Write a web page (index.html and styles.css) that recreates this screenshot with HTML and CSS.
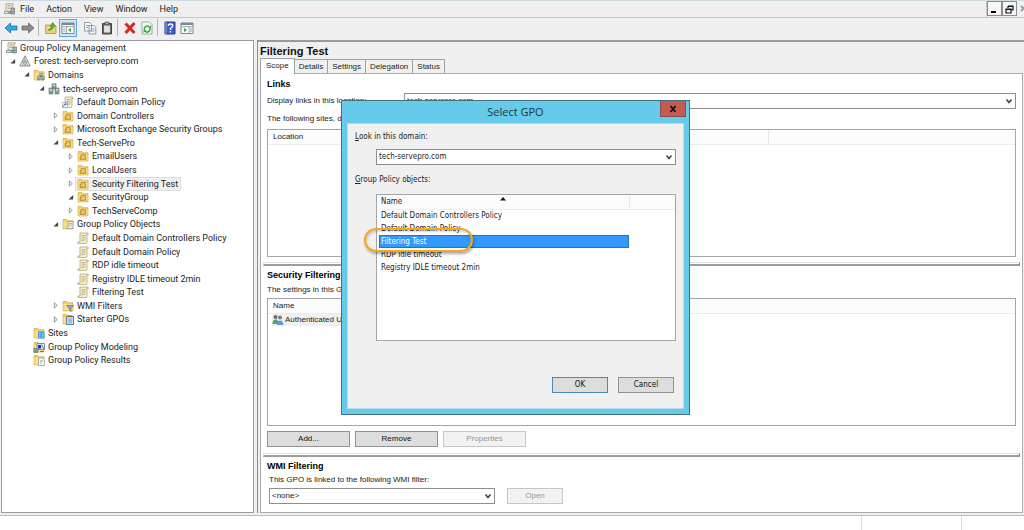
FILE: index.html
```
<!DOCTYPE html>
<html lang="en">
<head>
<meta charset="utf-8">
<title>Group Policy Management</title>
<link rel="stylesheet" href="styles.css">
</head>
<body>
<svg class="defs" aria-hidden="true">
  <symbol id="scroll" viewBox="0 0 12 12"><path d="M3 1h7.500q1 0 .8 1.500H10V10q0 1.500-1.500 1.500H1.500Q.5 11.500.8 10H3z" fill="#f6efcf" stroke="#a89868" stroke-width=".7"/><path d="M4.500 3.500h4M4.500 5.200h4M4.500 7h4M4.500 8.700h3" stroke="#b3a577" stroke-width=".8"/><path d="M9.500 1.200q2-.2 1.700 1.800H9.500z" fill="#c9b87e"/></symbol>
  <symbol id="folder" viewBox="0 0 12 12"><path d="M1 1.500h4l1 1.200h5V11H1z" fill="#f2cf6c" stroke="#d0a23a" stroke-width=".6"/><path d="M1.500 4h9v6.500h-9z" fill="#f8dd8b"/></symbol>
  <symbol id="console" viewBox="0 0 12 12"><path d="M3 .7h6.500q1 0 .7 1.300H9v6H3z" fill="#f4eed6" stroke="#9c9172" stroke-width=".7"/><path d="M4.500 2.500h3M4.500 4h3M4.500 5.500h3" stroke="#a79c78" stroke-width=".7"/><path d="M1 8h7l2 3H1z" fill="#9aa1a3"/><path d="M8 5h3.500v6H8z" fill="#aab2b5" stroke="#59636a" stroke-width=".6"/><path d="M2 9.500h3" stroke="#e8eef0"/><path d="M9 8.500h1.500" stroke="#36a345"/></symbol>
  <symbol id="forest" viewBox="0 0 12 12"><path d="M6 .8 11.300 11H.7z" fill="#ececec" stroke="#777" stroke-width=".8"/><path d="M6 1v5L3 11M6 6l3 5M3.300 6h5.400L6 11z" fill="#ccc" stroke="#888" stroke-width=".6"/></symbol>
  <symbol id="servers" viewBox="0 0 12 12"><path d="M4 .8h4v5H4zM1 5h4v6H1zM7 5h4v6H7z" fill="#9aa8aa" stroke="#59686c" stroke-width=".6"/><path d="M5 2.200h2M2 6.700h2M8 6.700h2" stroke="#eef3f3"/><path d="M5 4.300h1.500M2 9.500h1.500M8 9.500h1.500" stroke="#2da23d" stroke-width="1.200"/></symbol>
  <symbol id="domains" viewBox="0 0 12 12"><use href="#folder"/><use href="#servers" x="4" y="3.500" width="8" height="8.500"/></symbol>
  <symbol id="link" viewBox="0 0 12 12"><use href="#scroll"/><path d="M.5 6.500h5v5h-5z" fill="#fff" stroke="#7a8fb5" stroke-width=".6"/><path d="M1.500 10.500q.2-2.500 2.700-2.500M3 7l1.400 1L3.300 9.300" fill="none" stroke="#2355c4" stroke-width=".9"/></symbol>
  <symbol id="ou" viewBox="0 0 12 12"><use href="#folder"/><path d="M4 4.500h4.500v5H3V6.500h1z" fill="#d9aa3f" stroke="#a9822c" stroke-width=".6"/><path d="M5 6h2.500M4.500 7.800h3" stroke="#fdf0bd" stroke-width=".8"/></symbol>
  <symbol id="gpos" viewBox="0 0 12 12"><use href="#folder"/><path d="M6 3.500h5v7H4.500q-1-1 .5-1.500h1z" fill="#eceadf" stroke="#8e8a7a" stroke-width=".6"/><path d="M7 5.500h3M7 7.200h3" stroke="#999" stroke-width=".6"/></symbol>
  <symbol id="wmi" viewBox="0 0 12 12"><use href="#folder"/><path d="M4.500 5.500h7L9 8.500v3L7.300 10V8.500z" fill="#93abc0" stroke="#51697e" stroke-width=".6"/></symbol>
  <symbol id="starter" viewBox="0 0 12 12"><use href="#folder"/><path d="M4.500 3.500h7v8h-7z" fill="#cfe0f3" stroke="#3f5f88" stroke-width=".8"/><path d="M6 3.300h4" stroke="#8d5d36" stroke-width="1.500"/><path d="M6 6h4M6 7.700h4M6 9.400h4" stroke="#5f87b8" stroke-width=".7"/></symbol>
  <symbol id="sites" viewBox="0 0 12 12"><use href="#folder"/><path d="M5 4.500h6.500v7H5z" fill="#2f93dc"/><path d="M5.700 6.300h2M8.700 6.300h2M5.700 8.200h2M8.700 8.200h2M5.700 10.100h2M8.700 10.100h2" stroke="#cdeaff" stroke-width=".9"/></symbol>
  <symbol id="model" viewBox="0 0 12 12"><use href="#folder"/><path d="M4 2.500h7.500v6H4z" fill="#dfe6f5" stroke="#5969a0" stroke-width=".7"/><path d="M5 4h3v3.500H5z" fill="#1d36a8"/><path d="M8.500 3.500 11 8M7 10.500h4" stroke="#6674a3"/><path d="M.8 7.500h4v4h-4z" fill="#8aa08f" stroke="#4c6158" stroke-width=".5"/><path d="M2 10h1.500" stroke="#28b340" stroke-width="1.200"/></symbol>
  <symbol id="results" viewBox="0 0 12 12"><use href="#folder"/><path d="M5.500 4h4.200L11.500 6v5.500h-6z" fill="#f7f9fb" stroke="#7b8792" stroke-width=".6"/><path d="M7 7h3M7 9h1.500" stroke="#5690c5" stroke-width=".8"/></symbol>
  <symbol id="open" viewBox="0 0 12 12"><path d="M10.500 9.500h-8l8-8z" fill="#444"/></symbol>
  <symbol id="closed" viewBox="0 0 12 12"><path d="M4 1.500 9 6l-5 4.500z" fill="#fff" stroke="#777" stroke-width="1.300"/></symbol>
  <symbol id="chev" viewBox="0 0 8 8"><path d="m1.500 2.500 2.500 3 2.500-3" fill="none" stroke="#444" stroke-width="1.600"/></symbol>
</svg>

<header class="menubar">
  <svg class="ico"><use href="#console"/></svg>
  <nav class="menus">
    <button>File</button><button>Action</button><button>View</button><button>Window</button><button>Help</button>
  </nav>
  <div class="mdi">
    <button class="mdi-btn" aria-label="Minimize"><svg viewBox="0 0 12 12"><path d="M3 9h5" stroke="#000" stroke-width="2"/></svg></button>
    <button class="mdi-btn" aria-label="Restore"><svg viewBox="0 0 12 12"><path d="M5 3h5v4H8M5 3v2M5 3.500h5M3 6h5v4H3zM3 6.500h5" fill="none" stroke="#111" stroke-width="1.200"/></svg></button>
    <button class="mdi-close" aria-label="Close"><svg viewBox="0 0 12 12"><path d="m4 3 5 5M9 3 4 8" stroke="#8fa3b3" stroke-width="1.800"/></svg></button>
  </div>
</header>

<div class="toolbar">
  <button aria-label="Back"><svg viewBox="0 0 14 14"><path d="M1 7l5.500-5v3H13v4H6.500v3z" fill="#35a8e8" stroke="#1b6eac" stroke-width=".8"/></svg></button>
  <button aria-label="Forward"><svg viewBox="0 0 14 14"><path d="M13 7 7.500 2v3H1v4h6.500v3z" fill="#8b8b8b" stroke="#666" stroke-width=".8"/></svg></button>
  <i class="sep"></i>
  <button aria-label="Up one level"><svg viewBox="0 0 14 14"><path d="M1.500 4h4l1 1H12v7.500H1.500z" fill="#f0cf72" stroke="#bb9338" stroke-width=".8"/><path d="M4 9q3 0 3.500-4H5.800L8.700 1.500 11.500 5H9.800Q9 10 4 9" fill="#4bb83c" stroke="#2b8528" stroke-width=".5"/></svg></button>
  <button class="on" aria-label="Show console tree"><svg viewBox="0 0 14 14"><path d="M1 2h12v10.500H1z" fill="#fff" stroke="#7c8791"/><path d="M1 3h12" stroke="#7c8791" stroke-width="2"/><path d="M1 5.700h12M5.500 5v7" stroke="#9aa4ad"/><path d="M2.300 8h2M2.300 10h2" stroke="#8b98a5"/><path d="m7 9 3-2.200v4.400z" fill="#45a73e"/></svg></button>
  <button aria-label="Copy"><svg viewBox="0 0 14 14"><path d="M1.500 1.500h5l2 2V10h-7zM6 4.500h4.500l2.300 2V13H6z" fill="#f8fafc" stroke="#8292a3" stroke-width=".9"/><path d="M3 4.500h3M3 6.500h2M7.500 8h4M7.500 10h4" stroke="#82a4ce"/></svg></button>
  <button aria-label="Paste"><svg viewBox="0 0 14 14"><path d="M2.500 2.500h9V13h-9z" fill="#666" stroke="#444"/><path d="M4 4.500h6v7H4z" fill="#e1e1e1"/><path d="M5 1.200h4v2.500H5z" fill="#aaa" stroke="#444" stroke-width=".7"/></svg></button>
  <i class="sep"></i>
  <button aria-label="Delete"><svg viewBox="0 0 14 14"><path d="m2.500 2.500 9 9.500M11.500 2 2.500 12" stroke="#d9281c" stroke-width="3"/></svg></button>
  <button aria-label="Refresh"><svg viewBox="0 0 14 14"><path d="M2 1h7.500L12 3.500V13H2z" fill="#f7fbf6" stroke="#98a397" stroke-width=".9"/><path d="M4.500 9A3 3 0 0 1 9 5.500M9.800 7A3 3 0 0 1 5 10.300" fill="none" stroke="#34ac3d" stroke-width="1.500"/><path d="M8 7h3V4zM6.500 9h-3v3z" fill="#34ac3d"/></svg></button>
  <i class="sep"></i>
  <button aria-label="Help"><svg viewBox="0 0 14 14"><path d="M2 1h10v12H2z" fill="#3b5fc4" stroke="#24408f"/><path d="M3 1v12" stroke="#8ca5e8"/><path d="M5.300 5q0-2 2.200-2t2.200 1.800Q9.700 6 7.500 7.300V9M7.500 10v1.600" fill="none" stroke="#fff" stroke-width="1.400"/></svg></button>
  <button aria-label="Show action pane"><svg viewBox="0 0 14 14"><path d="M1 2h12v10.500H1z" fill="#fff" stroke="#7c8791"/><path d="M1 3h12" stroke="#7c8791" stroke-width="2"/><path d="M1 5.700h12M9 5v7" stroke="#9aa4ad"/><path d="M10 8h2M10 10h2" stroke="#8b98a5"/><path d="M7 9 4 6.800v4.400z" fill="#45a73e"/></svg></button>
</div>

<main class="main">
  <ul class="tree">
    <li class="l0"><svg class="ico"><use href="#console"/></svg><span>Group Policy Management</span></li>
    <li class="l1"><svg class="tw"><use href="#open"/></svg><svg class="ico"><use href="#forest"/></svg><span>Forest: tech-servepro.com</span></li>
    <li class="l2"><svg class="tw"><use href="#open"/></svg><svg class="ico"><use href="#domains"/></svg><span>Domains</span></li>
    <li class="l3"><svg class="tw"><use href="#open"/></svg><svg class="ico"><use href="#servers"/></svg><span>tech-servepro.com</span></li>
    <li class="l4"><svg class="tw"></svg><svg class="ico"><use href="#link"/></svg><span>Default Domain Policy</span></li>
    <li class="l4"><svg class="tw"><use href="#closed"/></svg><svg class="ico"><use href="#ou"/></svg><span>Domain Controllers</span></li>
    <li class="l4"><svg class="tw"><use href="#closed"/></svg><svg class="ico"><use href="#ou"/></svg><span>Microsoft Exchange Security Groups</span></li>
    <li class="l4"><svg class="tw"><use href="#open"/></svg><svg class="ico"><use href="#ou"/></svg><span>Tech-ServePro</span></li>
    <li class="l5"><svg class="tw"><use href="#closed"/></svg><svg class="ico"><use href="#ou"/></svg><span>EmailUsers</span></li>
    <li class="l5"><svg class="tw"><use href="#closed"/></svg><svg class="ico"><use href="#ou"/></svg><span>LocalUsers</span></li>
    <li class="l5"><svg class="tw"><use href="#closed"/></svg><div class="picked"><svg class="ico"><use href="#ou"/></svg><span>Security Filtering Test</span></div></li>
    <li class="l5"><svg class="tw"><use href="#open"/></svg><svg class="ico"><use href="#ou"/></svg><span>SecurityGroup</span></li>
    <li class="l5"><svg class="tw"><use href="#closed"/></svg><svg class="ico"><use href="#ou"/></svg><span>TechServeComp</span></li>
    <li class="l4"><svg class="tw"><use href="#open"/></svg><svg class="ico"><use href="#gpos"/></svg><span>Group Policy Objects</span></li>
    <li class="l5"><svg class="tw"></svg><svg class="ico"><use href="#scroll"/></svg><span>Default Domain Controllers Policy</span></li>
    <li class="l5"><svg class="tw"></svg><svg class="ico"><use href="#scroll"/></svg><span>Default Domain Policy</span></li>
    <li class="l5"><svg class="tw"></svg><svg class="ico"><use href="#scroll"/></svg><span>RDP idle timeout</span></li>
    <li class="l5"><svg class="tw"></svg><svg class="ico"><use href="#scroll"/></svg><span>Registry IDLE timeout 2min</span></li>
    <li class="l5"><svg class="tw"></svg><svg class="ico"><use href="#scroll"/></svg><span>Filtering Test</span></li>
    <li class="l4"><svg class="tw"><use href="#closed"/></svg><svg class="ico"><use href="#wmi"/></svg><span>WMI Filters</span></li>
    <li class="l4"><svg class="tw"><use href="#closed"/></svg><svg class="ico"><use href="#starter"/></svg><span>Starter GPOs</span></li>
    <li class="l2"><svg class="tw"></svg><svg class="ico"><use href="#sites"/></svg><span>Sites</span></li>
    <li class="l2"><svg class="tw"></svg><svg class="ico"><use href="#model"/></svg><span>Group Policy Modeling</span></li>
    <li class="l2"><svg class="tw"></svg><svg class="ico"><use href="#results"/></svg><span>Group Policy Results</span></li>
  </ul>

  <section class="pane">
    <h1>Filtering Test</h1>
    <div class="tabs">
      <button class="tab active">Scope</button><button class="tab">Details</button><button class="tab">Settings</button><button class="tab">Delegation</button><button class="tab">Status</button>
    </div>
    <div class="scope">
      <h2>Links</h2>
      <div class="location">
        <label for="loc">Display links in this location:</label>
        <div class="combo"><select id="loc"><option>tech-servepro.com</option></select><svg class="chev"><use href="#chev"/></svg></div>
      </div>
      <p>The following sites, domains, and OUs are linked to this GPO:</p>
      <div class="list links">
        <table><thead><tr><th class="wide">Location</th><th></th></tr></thead></table>
      </div>
      <hr>
      <h2>Security Filtering</h2>
      <p>The settings in this GPO can only apply to the following groups, users, and computers:</p>
      <div class="list">
        <table><thead><tr><th>Name</th></tr></thead>
        <tbody><tr><td><div class="member"><svg class="ico" viewBox="0 0 12 12"><circle cx="3.500" cy="3" r="2" fill="#6b6b60"/><path d="M.5 10q0-4.500 3-4.500t3 4.500z" fill="#4ba36e"/><circle cx="8" cy="3.500" r="2" fill="#777c85"/><path d="M5 11q0-4.500 3-4.500t3.500 4.500z" fill="#5b98d6"/></svg><span>Authenticated Users</span></div></td></tr></tbody></table>
      </div>
      <div class="actions">
        <button class="btn">Add...</button><button class="btn">Remove</button><button class="btn" disabled>Properties</button>
      </div>
      <hr>
      <h2>WMI Filtering</h2>
      <label class="wmi-label" for="wmi-sel">This GPO is linked to the following WMI filter:</label>
      <div class="wmi-row">
        <div class="combo"><select id="wmi-sel"><option>&lt;none&gt;</option></select><svg class="chev"><use href="#chev"/></svg></div>
        <button class="btn" disabled>Open</button>
      </div>
    </div>
  </section>
</main>

<footer class="status"><span></span><span></span><span></span></footer>

<div class="dialog" role="dialog" aria-labelledby="dlg-title">
  <div class="titlebar">
    <h2 id="dlg-title">Select GPO</h2>
    <button class="close" aria-label="Close"><svg viewBox="0 0 8 8"><path d="m1.500 1 5 6M6.500 1l-5 6" stroke="#111" stroke-width="1.700"/></svg></button>
  </div>
  <div class="client">
    <label for="dom"><u>L</u>ook in this domain:</label>
    <div class="combo"><select id="dom"><option>tech-servepro.com</option></select><svg class="chev"><use href="#chev"/></svg></div>
    <p><u>G</u>roup Policy objects:</p>
    <div class="list gpos">
      <svg class="sort" viewBox="0 0 6 4"><path d="M3 0l3 3.500H0z" fill="#111"/></svg>
      <table>
        <thead><tr><th class="name">Name</th><th></th></tr></thead>
        <tbody>
          <tr><td>Default Domain Controllers Policy</td><td></td></tr>
          <tr><td>Default Domain Policy</td><td></td></tr>
          <tr><td class="chosen"><div>Filtering Test</div></td><td></td></tr>
          <tr><td>RDP idle timeout</td><td></td></tr>
          <tr><td>Registry IDLE timeout 2min</td><td></td></tr>
        </tbody>
      </table>
      <div class="ring"></div>
    </div>
    <div class="buttons"><button class="btn default">OK</button><button class="btn">Cancel</button></div>
  </div>
</div>
</body>
</html>
```
FILE: styles.css
```
* { box-sizing: border-box; }
body {
  margin: 0;
  height: 100vh;
  display: flex;
  flex-direction: column;
  position: relative;
  overflow: hidden;
  background: #f0f0f0;
  color: #222;
  font: 9px/12px Roboto, "Open Sans", sans-serif;
}
h1, h2, p, ul { margin: 0; padding: 0; }
button, select { font: inherit; color: inherit; margin: 0; padding: 0; border: 0; background: none; }
svg { display: block; flex: none; }
.defs { position: absolute; width: 0; height: 0; }
.ico { width: 12px; height: 12px; }

.menubar {
  display: flex;
  flex: none;
  align-items: center;
  height: 18px;
  padding-left: 3px;
  border-top: 1px solid #cfdde2;
  border-bottom: 1px solid #c6c6c6;
}
.menus { display: flex; gap: 12px; margin-left: 5px; }
.mdi {
  display: flex;
  width: 38px;
  height: 16px;
  margin-left: auto;
  overflow: hidden;
  border-left: 1px solid #c6c6c6;
}
.mdi-btn { width: 15px; height: 15px; flex: none; border: 1px solid #8c8c8c; background: #f6f6f6; }
.mdi-btn svg, .mdi-close svg { width: 12px; height: 12px; }
.mdi-close { flex: none; }

.toolbar { display: flex; flex: none; align-items: center; height: 22px; padding: 0 4px 3px 3px; }
.toolbar button { padding: 1px; }
.toolbar svg { width: 14px; height: 14px; }
.toolbar button + button { margin-left: 1px; }
.toolbar .on { padding: 1px; border: 1px solid #5aa9dc; background: #cde8f8; }
.toolbar .on + button { margin-left: 5px; }
.toolbar button + .on { margin-left: 0; }
.sep { width: 1px; height: 17px; margin: 0 4px 0 2px; background: #b5b5b5; }

.main { flex: 1; min-height: 0; display: flex; gap: 3px; padding: 0 0 2px 1px; border-bottom: 1px solid #bdbdbd; }
.tree {
  width: 253px;
  flex: none;
  display: grid;
  grid-template-rows: repeat(24, minmax(0, 1fr));
  padding-bottom: 145px;
  list-style: none;
  background: #fff;
  border: 1px solid #9b9ba3;
}
.tree li { display: flex; align-items: center; min-height: 0; }
.tree span { margin-left: 3px; white-space: nowrap; }
.tw { width: 7px; height: 7px; margin-right: 3px; }
.l0 { padding-left: 3px; }
.l1 { padding-left: 7px; }
.l2 { padding-left: 21px; }
.l3 { padding-left: 36px; }
.l4 { padding-left: 50px; }
.l5 { padding-left: 65px; }
.picked { display: flex; align-items: center; margin-left: -2px; padding: 0 2px 0 1px; background: #f0f0f0; border: 1px solid #dedede; }

.pane {
  flex: 1;
  min-width: 0;
  display: flex;
  flex-direction: column;
  padding: 2px 1px 0 2px;
  border-top: 2px solid #9a9a9a;
  border-left: 1px solid #8c8c8c;
  font: 8px/12px "Liberation Sans", Arial, sans-serif;
}
.pane h1 { font-size: 11px; line-height: 14px; color: #111; }
.pane h2 { font-size: 9px; line-height: 12px; color: #000; }
.tabs { display: flex; align-items: flex-end; height: 15px; }
.tab { height: 14px; padding: 0 4px; border: 1px solid #a0a0a8; border-left-width: 0; border-bottom: 0; }
.tab.active { height: 16px; padding: 0 5px 2px; background: #fff; border-left-width: 1px; margin-bottom: -1px; position: relative; }
.scope {
  flex: 1;
  min-height: 0;
  display: flex;
  flex-direction: column;
  padding: 4px 6px 8px;
  background: #fff;
  border: 1px solid #a9a9b0;
}
.scope p { white-space: nowrap; overflow: hidden; flex: none; }
.scope hr { width: auto; height: 4px; margin: 5px -4px 3px; border: 1px solid #e2e2e2; border-bottom: 2px solid #9c9c9c; border-right-color: #777; }
.location { display: grid; grid-template-columns: 137px 1fr; align-items: center; margin: 3px 0 4px; }

.combo { position: relative; height: 16px; border: 1px solid #8e8e8e; background: #fff; }
.combo select { appearance: none; width: 100%; height: 100%; display: block; padding: 0 2px; border-radius: 0; }
.chev { position: absolute; right: 2px; top: 3px; width: 8px; height: 8px; pointer-events: none; }

.list { flex: 1; position: relative; background: #fff; border: 1px solid #a4a4ac; }
.list.links { margin-top: 4px; }
table { width: 100%; border-collapse: collapse; table-layout: fixed; }
th { height: 14px; padding: 0 5px; text-align: left; font-weight: normal; background: #fcfcfc; border-bottom: 1px solid #ececec; }
th:not(:last-child) { border-right: 1px solid #e6e6e6; }
td { padding: 0 5px; height: 12px; }
.wide { width: 67%; }
.scope h2 + p { margin: 3px 0 2px; }
.member { display: inline-flex; gap: 1px; background: #f0f0f0; }
.scope td { padding: 0 4px; }
.actions { display: flex; gap: 5px; margin: 5px 0 1px; }
.btn { width: 83px; height: 16px; background: #ddd; border: 1px solid #929292; color: #111; }
.btn:disabled { background: #f2f2f2; border-color: #c6c6c6; color: #969696; }
.wmi-label { margin: 2px 0 2px 2px; }
.wmi-row { display: flex; gap: 12px; margin-left: 2px; }
.wmi-row .combo { width: 226px; }
.wmi-row .btn { width: 56px; }

.status { display: flex; flex: none; height: 14px; background: #fff; }
.status span { border-right: 1px solid #dcdcdc; width: 100px; }
.status span:first-child { flex: 1; }
.status span:last-child { width: 62px; border: 0; }

.dialog {
  position: absolute;
  left: 341px;
  top: 100px;
  width: 349px;
  display: flex;
  flex-direction: column;
  padding: 0 5px 5px;
  background: #66cbea;
  border: 1px solid #47707f;
  font: 8px/12px "DejaVu Sans Condensed", "DejaVu Sans", sans-serif;
}
.titlebar { display: flex; justify-content: center; height: 22px; position: relative; }
.titlebar h2 { font: 11px/22px "Open Sans", sans-serif; color: #1d3540; }
.close { position: absolute; right: -2px; top: 0; width: 26px; height: 16px; display: grid; place-items: center; background: #c45a50; border: 1px solid #8b4b49; border-top: 0; }
.close svg { width: 8px; height: 8px; }
.client { display: flex; flex-direction: column; padding: 7px 7px 15px; background: #f0f0f0; border: 1px solid #b5dcea; }
.client .combo, .client .list { margin-left: 21px; }
.client .combo { margin-top: 6px; }
.client p { margin: 9px 0 8px; }
.client .list { flex: none; height: 147px; }
.gpos { padding: 0 0 0 2px; }
.gpos .name { width: 250px; }
.gpos th, .gpos td { padding: 0 2px; }
.gpos td { height: 13px; }
.gpos .chosen { padding: 0; color: #fff; }
.chosen div { line-height: 11px; padding: 0 1px; background: #3399ff; border: 1px solid #2f6fb5; }
.sort { position: absolute; left: 123px; top: 2px; width: 6px; height: 4px; }
.ring { position: absolute; left: -13px; top: 33px; width: 109px; height: 24px; border: 2px solid #f2a71c; border-radius: 12px; box-shadow: 1px 2px 3px rgba(0, 0, 0, .35), inset 1px 2px 2px rgba(0, 0, 0, .15); }
.buttons { display: flex; justify-content: flex-end; gap: 10px; margin: 36px 2px 0 0; }
.buttons .btn { width: 56px; }
.btn.default { border-color: #4a8ab8; }
```
